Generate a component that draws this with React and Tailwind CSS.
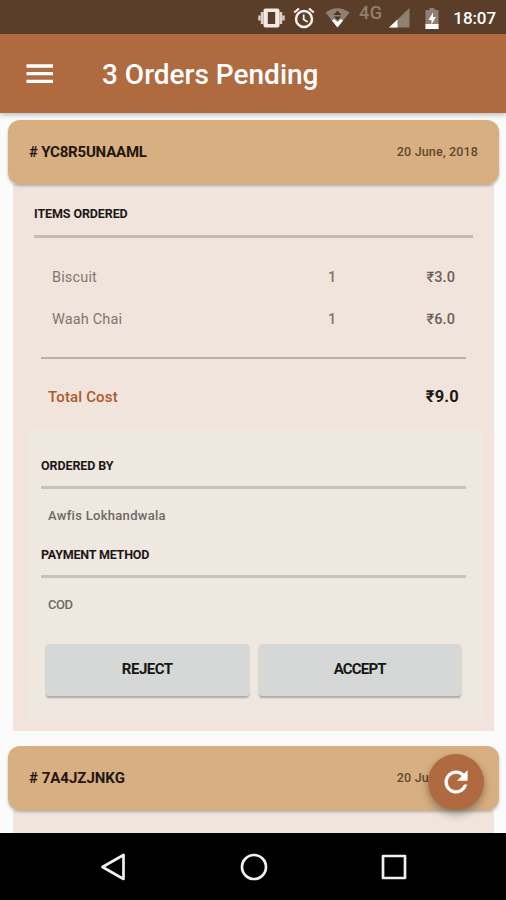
import React from 'react';

const orders = [
  {
    id: 'YC8R5UNAAML',
    idStyle: 'tracking-[-0.2px]',
    date: '20 June, 2018',
    items: [
      { name: 'Biscuit', qty: 1, price: '₹3.0' },
      { name: 'Waah Chai', qty: 1, price: '₹6.0' }
    ],
    total: '₹9.0',
    customer: 'Awfis Lokhandwala',
    payment: 'COD'
  },
  {
    id: '7A4JZJNKG',
    idStyle: 'tracking-[0px]',
    date: '20 June, 2018'
  }
];

const StatusBar = () => (
  <div className="h-[34px] shrink-0 bg-[#5a3e2a] flex items-center justify-end pr-[10px] pt-[2px] text-white">
    {/* Vibrate */}
    <svg width="27" height="20" viewBox="0 0 27 20" className="mr-[8px]">
      <rect x="5.5" y=".5" width="16" height="19" rx="2" fill="#f2e9e4" />
      <rect x="9.8" y="4" width="7.4" height="12" fill="#5a3e2a" />
      <path d="M4.2 4v12M22.8 4v12" stroke="#dccfc7" strokeWidth="2.8" />
      <path d="M1.5 7.5v5M25.5 7.5v5" stroke="#dccfc7" strokeWidth="2.4" />
    </svg>
    {/* Alarm */}
    <svg width="22" height="22" viewBox="0 0 22 22" fill="none" stroke="#f7f0ec" className="mr-[10px]">
      <circle cx="11" cy="12" r="8" strokeWidth="2.5" />
      <path d="M1.2 5.5L6 1.5M20.8 5.5L16 1.5" strokeWidth="2.2" />
      <path d="M10.7 7.5v5l4 2.4" strokeWidth="1.8" />
    </svg>
    {/* Wifi */}
    <svg width="25" height="20" viewBox="0 0 25 20" className="mr-[9px]">
      <path d="M.5 4.5Q12.5-4 24.5 4.5L12.5 19.5z" fill="#917f72" />
      <path d="M6.9 12.4L9.2 11l3.3 3 3.3-3 2.3 1.4-5.6 7.1z" fill="#fff" />
      <path d="M12.5 2.5l4 4.5h-8zM8.8 8.5h7.4l-3.7 3.8z" fill="#4b3323" />
    </svg>
    <span className="text-[18px] leading-none font-medium text-[#917f72] mr-[7px] mb-[10px] tracking-[0.4px]">4G</span>
    {/* Signal */}
    <svg width="21" height="20" viewBox="0 0 21 20" className="mr-[15px]">
      <path d="M20.5 0v19.5H0z" fill="#917f72" />
      <path d="M8.5 11.5v8H0z" fill="#fff" />
    </svg>
    {/* Battery */}
    <svg width="14" height="21" viewBox="0 0 14 21" className="mr-[14px]">
      <path d="M4.5 0h5v2H13.5v19H.5V2h4z" fill="#917f72" />
      <path d="M.5 16h13v5H.5z" fill="#fff" />
      <path d="M8 4.5L3.5 12H6.5v4.5L10.8 9H8z" fill="#fff" />
    </svg>
    <span className="text-[17px] leading-none font-medium tracking-[-0.1px]">18:07</span>
  </div>
);

const SectionTitle = ({ className, children }) => (
  <h3 className={`text-[12.5px] leading-[16px] font-bold text-[#1d1715] ${className}`}>{children}</h3>
);

const OrderHeader = ({ order }) => (
  <div className="relative h-[64px] shrink-0 mx-[-5px] pl-[21px] pr-[21px] flex items-center justify-between bg-[#d8af80] rounded-xl shadow-[0_2px_3px_rgba(0,0,0,0.25)]">
    <span className={`text-[15px] font-bold text-[#1f160f] ${order.idStyle}`}># {order.id}</span>
    <span className="text-[12.5px] font-medium text-[#604931] tracking-[0.15px]">{order.date}</span>
  </div>
);

const OrderBody = ({ order }) => (
  <div className="h-[547px] shrink-0 bg-[#f0e4dc] pl-[15px] pr-[12px] pt-[22px]">
    <SectionTitle className="ml-[6px] tracking-[-0.1px]">ITEMS ORDERED</SectionTitle>
    <div className="ml-[6px] mr-[9px] mt-[13px] h-[3px] bg-[#c8bbb3]" />

    <div className="mt-[19px]">
      {order.items.map((item) => (
        <div key={item.name} className="h-[42px] flex items-center pl-[24px] pr-[27px] text-[14.5px]">
          <span className="w-[276px] text-[#80766f] tracking-[0.15px]">{item.name}</span>
          <span className="text-[#80766f] font-medium">{item.qty}</span>
          <span className="ml-auto text-[#6b615b] font-medium tracking-[0.1px]">{item.price}</span>
        </div>
      ))}
    </div>

    <div className="ml-[13px] mr-[16px] mt-[16px] h-[2px] bg-[#bdaea8]" />
    <div className="h-[71px] pt-[6px] pl-[20px] pr-[23px] flex items-center justify-between">
      <span className="text-[15px] font-medium text-[#af5925] tracking-[0.15px]">Total Cost</span>
      <span className="text-[16.5px] font-bold text-[#1d1715] tracking-[0.2px]">{order.total}</span>
    </div>

    <div className="h-[289px] bg-[#eee8e1] pl-[13px] pr-[16px] pt-[28px]">
      <SectionTitle className="tracking-[-0.1px]">ORDERED BY</SectionTitle>
      <div className="mt-[12px] h-[3px] bg-[#c8c2bf]" />
      <p className="mt-[18px] ml-[7px] text-[13px] leading-[18px] font-medium text-[#6d6865] tracking-[0.3px]">{order.customer}</p>
      <SectionTitle className="mt-[22px] tracking-[-0.2px]">PAYMENT METHOD</SectionTitle>
      <div className="mt-[12px] h-[3px] bg-[#c8c2bf]" />
      <p className="mt-[18px] ml-[7px] text-[13px] leading-[18px] font-medium text-[#6d6865] tracking-[-0.5px]">{order.payment}</p>
      <div className="mt-[30px] pl-[5px] pr-[5px] flex gap-[10px]">
        <button className="flex-1 h-[52px] pb-[2px] rounded-[3px] bg-[#d6d8d7] text-[15px] font-bold text-[#171717] tracking-[-0.5px] shadow-[0_2px_2px_rgba(0,0,0,0.28)]">
          REJECT
        </button>
        <button className="flex-1 h-[52px] pb-[2px] rounded-[3px] bg-[#d6d8d7] text-[15px] font-bold text-[#171717] tracking-[-0.8px] shadow-[0_2px_2px_rgba(0,0,0,0.28)]">
          ACCEPT
        </button>
      </div>
    </div>
  </div>
);

const App = () => {
  const [current, next] = orders;

  return (
    <div className="relative w-[506px] h-[900px] flex flex-col overflow-hidden bg-[#fbfbfb] font-['Roboto',sans-serif]">
      <StatusBar />

      <header className="relative h-[79px] shrink-0 bg-[#af6a3f] flex items-center pl-[26px] shadow-[0_2px_5px_rgba(0,0,0,0.25)]">
        <svg width="28" height="20" viewBox="0 0 28 20" stroke="#fff" strokeWidth="3.3">
          <path d="M.5 2h26.5M.5 9.7h26.5M.5 17.4h26.5" />
        </svg>
        <h1 className="ml-[48px] pt-[3px] text-[28px] font-medium text-white">3 Orders Pending</h1>
      </header>

      <main className="h-[720px] shrink-0 overflow-hidden flex flex-col pt-[7px] pl-[13px] pr-[12px]">
        <OrderHeader order={current} />
        <OrderBody order={current} />
        <div className="h-[15px] shrink-0" />
        <OrderHeader order={next} />
        <div className="flex-1 bg-[#f0e4dc]" />
      </main>

      <nav className="h-[67px] shrink-0 bg-black flex justify-between pl-[99px] pr-[98px] items-center">
        <svg width="28" height="30" viewBox="0 0 28 30" fill="none" stroke="#f0f0f0" strokeWidth="2.7" strokeLinejoin="round">
          <path d="M24.5 3v24L3.5 15z" />
        </svg>
        <svg width="30" height="30" viewBox="0 0 30 30" fill="none" stroke="#f0f0f0" strokeWidth="2.7">
          <circle cx="15" cy="15" r="12" />
        </svg>
        <svg width="28" height="28" viewBox="0 0 28 28" fill="none" stroke="#f0f0f0" strokeWidth="2.7" strokeLinejoin="round">
          <rect x="3" y="3" width="22" height="22" />
        </svg>
      </nav>

      {/* Floating refresh button */}
      <button className="absolute right-[22px] bottom-[90px] w-[56px] h-[56px] rounded-full bg-[#af6a3f] flex items-center justify-center shadow-[0_4px_8px_rgba(0,0,0,0.35)]">
        <svg width="34" height="34" viewBox="0 0 24 24" fill="#fff" stroke="#fff" strokeWidth="0.35">
          <path d="M17.65 6.35A7.96 7.96 0 0 0 12 4a8 8 0 1 0 7.73 10h-2.08A6 6 0 1 1 12 6c1.66 0 3.14.69 4.22 1.78L13 11h7V4z" />
        </svg>
      </button>
    </div>
  );
};

export default App;
